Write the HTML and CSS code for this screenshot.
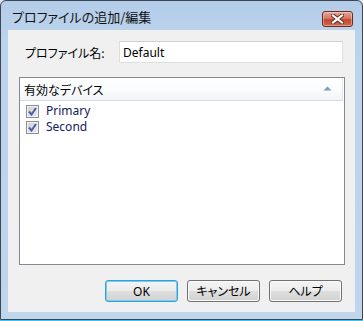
FILE: index.html
```html
<!DOCTYPE html>
<html>
    <head>
        <title>プロファイルの追加/編集</title>
        <link rel="stylesheet" href="styles.css">
    </head>
    <body>
        <div class="window">

            <div class="titlebar">
                <span class="title">プロファイルの追加/編集</span>
                <div class="close">
                    <svg width="13" height="10" viewBox="0 0 13 10">
                        <path d="M2 1.5 L11 8.5 M11 1.5 L2 8.5" stroke="#5a2a22" stroke-width="4" stroke-linecap="square" fill="none"/>
                        <path d="M2 1.5 L11 8.5 M11 1.5 L2 8.5" stroke="#ffffff" stroke-width="2.2" stroke-linecap="square" fill="none"/>
                    </svg>
                </div>
            </div>

            <div class="client">

                <div class="nameRow">
                    <label class="nameLabel">プロファイル名:</label>
                    <div class="nameInput">Default</div>
                </div>

                <div class="deviceList">
                    <div class="listHeader">
                        <span>有効なデバイス</span>
                        <svg class="caret" width="9" height="5" viewBox="0 0 9 5">
                            <path d="M0.5 4.5 L4.5 0.5 L8.5 4.5 Z" fill="#7d9cc0"/>
                        </svg>
                    </div>

                    <div class="device">
                        <span class="check">
                            <svg width="9" height="9" viewBox="0 0 9 9">
                                <path d="M1 4.5 L3.5 7.5 L8 1" stroke="#4a5eae" stroke-width="2" fill="none"/>
                            </svg>
                        </span>
                        <span class="deviceName">Primary</span>
                    </div>
                    <div class="device">
                        <span class="check">
                            <svg width="9" height="9" viewBox="0 0 9 9">
                                <path d="M1 4.5 L3.5 7.5 L8 1" stroke="#4a5eae" stroke-width="2" fill="none"/>
                            </svg>
                        </span>
                        <span class="deviceName">Second</span>
                    </div>
                </div>

                <div class="buttons">
                    <button class="btn default">OK</button>
                    <button class="btn">キャンセル</button>
                    <button class="btn">ヘルプ</button>
                </div>

            </div>
        </div>
    </body>
</html>
```

FILE: styles.css
```css
html, body{
    margin: 0;
    padding: 0;
    background: #dfe6ee;
}

body{
    width: 363px;
    height: 321px;
    font-family: "Noto Sans", "Noto Sans CJK JP", sans-serif;
    font-size: 12px;
    color: #000;
    font-feature-settings: "palt";
}

.window{
    width: 363px;
    height: 320px;
    box-sizing: border-box;
    border: 1px solid #3c4654;
    border-radius: 6px 6px 0 0;
    padding: 0 7px 7px 7px;
    background: linear-gradient(to bottom, #b3cce8 0%, #bcd3ec 12%, #bfd5ec 100%);
    box-shadow: 0 1px 0 #3ec4ee;
}

.titlebar{
    height: 29px;
    display: flex;
    align-items: flex-start;
    justify-content: space-between;
}

.title{
    font-family: "Noto Sans CJK JP", sans-serif;
    font-size: 13px;
    margin-top: 8px;
    margin-left: 4px;
    line-height: 16px;
    color: #111;
}

.close{
    width: 31px;
    height: 16px;
    box-sizing: border-box;
    margin-top: 10px;
    margin-right: 2px;
    border: 1px solid #6e2a20;
    border-radius: 3px;
    background: linear-gradient(to bottom, #e5a496 0%, #d5775f 45%, #c4462c 55%, #cf6a4c 100%);
    display: flex;
    align-items: center;
    justify-content: center;
    box-shadow: inset 0 0 0 1px rgba(255,255,255,0.35);
}

.client{
    height: 282px;
    box-sizing: border-box;
    background: #f0f0f0;
    padding: 11px 10px 0 11px;
}

.nameRow{
    display: flex;
    align-items: center;
    height: 22px;
}

.nameLabel{
    width: 100px;
    padding-left: 6px;
    box-sizing: border-box;
    font-family: "Noto Sans CJK JP", sans-serif;
}

.nameInput{
    width: 224px;
    height: 22px;
    box-sizing: border-box;
    border: 1px solid #dedede;
    border-top-color: #cfcfcf;
    background: #fff;
    padding: 3px 0 0 3px;
    line-height: 15px;
}

.deviceList{
    margin-top: 14px;
    width: 326px;
    height: 188px;
    box-sizing: border-box;
    border: 1px solid #848890;
    background: #fff;
}

.listHeader{
    height: 23px;
    margin-right: 1px;
    box-sizing: border-box;
    display: flex;
    align-items: center;
    justify-content: space-between;
    padding: 0 10px 0 4px;
    background: linear-gradient(to bottom, #ffffff 0%, #fbfcfd 50%, #f2f4f7 100%);
    border-bottom: 1px solid #d6dbe2;
    border-right: 1px solid #e3e6ea;
    font-family: "Noto Sans CJK JP", sans-serif;
}

.caret{
    margin-top: -2px;
}

.device{
    display: flex;
    align-items: center;
    height: 16px;
    padding-left: 6px;
}

.listHeader + .device{
    margin-top: 2px;
}

.check{
    width: 13px;
    height: 13px;
    box-sizing: border-box;
    border: 1px solid #8e8f8f;
    background: linear-gradient(135deg, #d0d0d0, #ededed);
    display: flex;
    align-items: center;
    justify-content: center;
    box-shadow: inset 0 0 0 1px #f2f2f2;
}

.deviceName{
    margin-left: 7px;
    color: #13205e;
    line-height: 16px;
}

.buttons{
    margin-top: 15px;
    display: flex;
    justify-content: flex-end;
    gap: 9px;
    padding-right: 3px;
}

.btn{
    width: 73px;
    height: 22px;
    box-sizing: border-box;
    border: 1px solid #707070;
    border-radius: 3px;
    background: linear-gradient(to bottom, #f4f4f4 0%, #ececec 48%, #dedede 52%, #d2d2d2 100%);
    box-shadow: inset 0 0 0 1px #fafafa;
    font-family: "Noto Sans", "Noto Sans CJK JP", sans-serif;
    font-size: 12px;
    font-feature-settings: "palt";
    color: #000;
    padding: 0;
}

.btn.default{
    border-color: #3c9ad8;
    box-shadow: inset 0 0 0 1px #6ed2f6;
}
```
